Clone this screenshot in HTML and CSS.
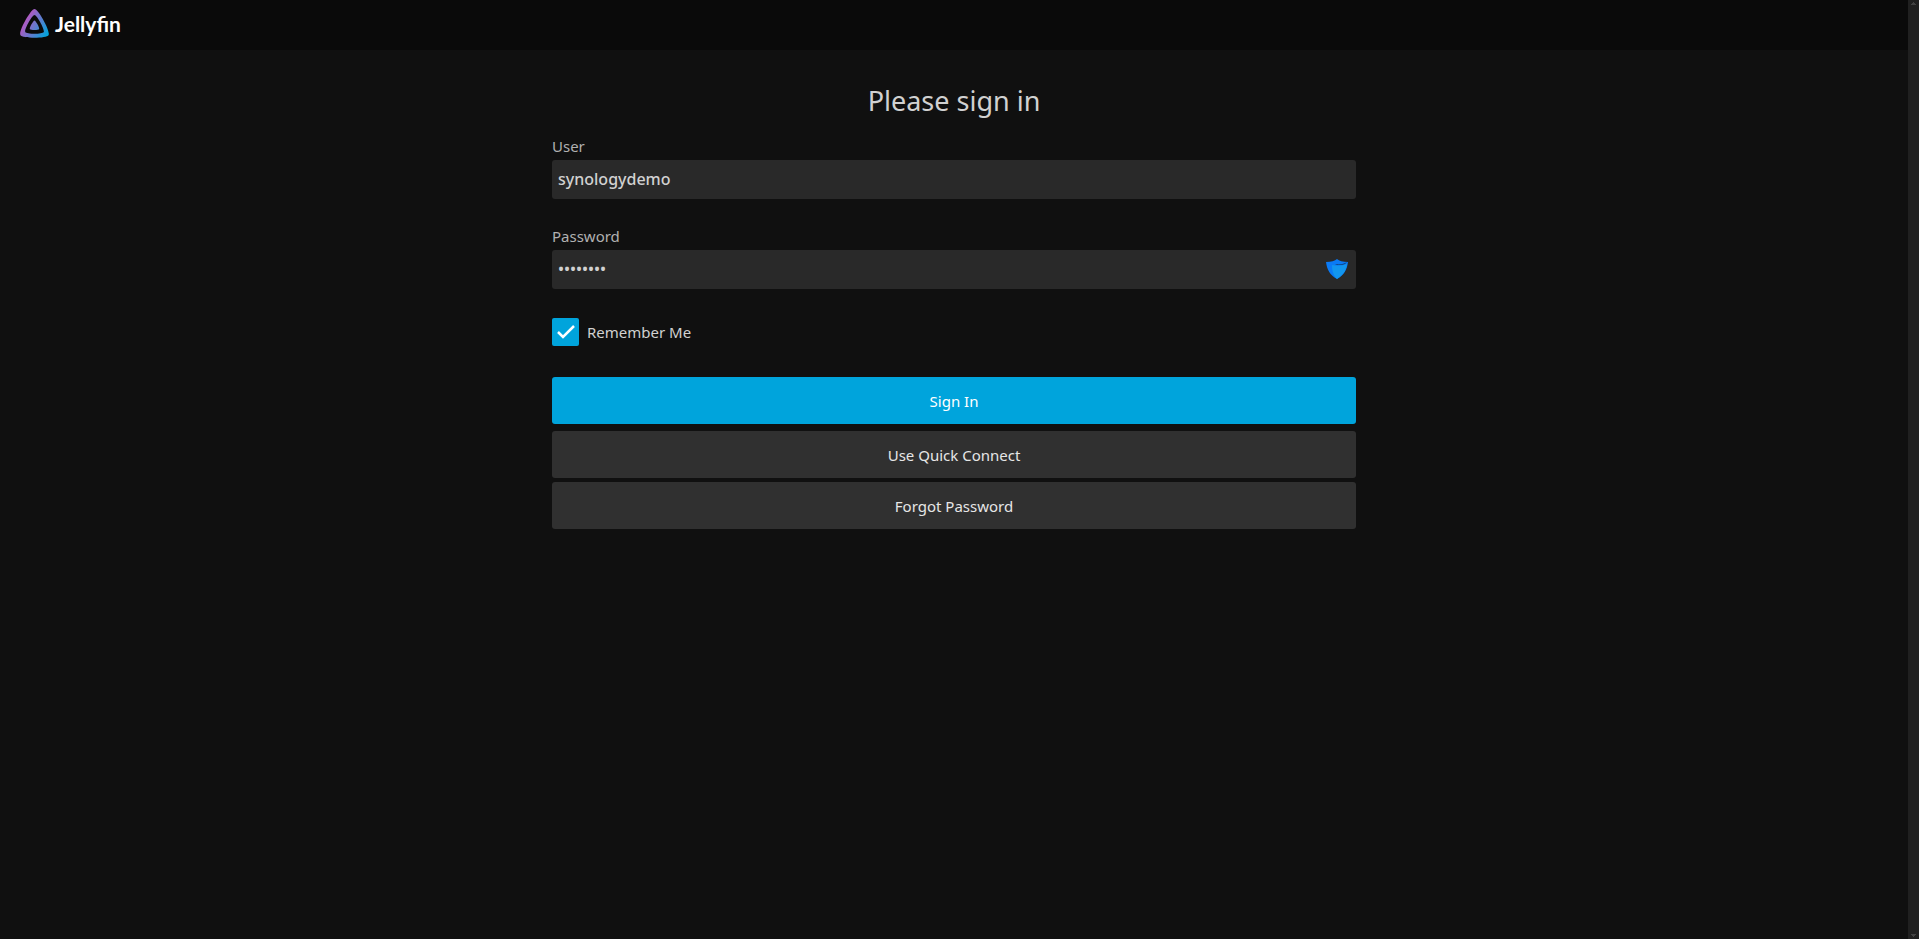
FILE: index.html
```html
<!DOCTYPE html>
<html lang="en">
    <head>
        <meta charset="utf-8">
        <meta name="viewport" content="width=device-width, initial-scale=1">
        <title>Jellyfin</title>
        <link rel="stylesheet" href="styles.css">
    </head>
    <body>
        <div class="page">
            <header class="header">
                <a class="logo" href="#">
                    <svg class="logo-icon" viewBox="0 0 512 512" aria-hidden="true">
                        <defs>
                            <linearGradient id="logo-gradient" x1="110" y1="213" x2="496" y2="436" gradientUnits="userSpaceOnUse">
                                <stop offset="0" stop-color="#aa5cc3"/>
                                <stop offset="1" stop-color="#00a4dc"/>
                            </linearGradient>
                        </defs>
                        <path fill="url(#logo-gradient)" d="M256 202c-22 0-94 131-83 152 11 22 156 22 166 0 11-21-61-152-83-152z"/>
                        <path fill="url(#logo-gradient)" fill-rule="evenodd" d="M256 0C189 0-26 391 6 457c33 66 467 65 500 0S323 0 256 0zm164 404c-21 43-306 43-327 0S213 104 256 104s185 257 164 300z"/>
                    </svg>
                    <span class="logo-text">Jellyfin</span>
                </a>
            </header>
            <main class="login">
                <form class="login-form">
                    <h1 class="title">Please sign in</h1>
                    <div class="field">
                        <label class="label" for="user">User</label>
                        <input class="input" id="user" type="text" value="synologydemo">
                    </div>
                    <div class="field">
                        <label class="label" for="password">Password</label>
                        <div class="password-box">
                            <input class="input" id="password" type="password" value="password">
                            <svg class="shield" viewBox="0 0 22 20" aria-hidden="true">
                                <path fill="#0a7af5" d="M11 0c2 2 6 3 11 3-1 8-4 13-11 17C4 16 1 11 0 3c5 0 9-1 11-3z"/>
                                <path fill="#1296ee" d="M6 6c5 1 10 1 15-1-1 7-4 11-10 15-3-3-5-7-5-14z"/>
                                <path fill="#12365f" d="M9 5c5 1 9 0 12-2-1 2-4 3-7 3-2 0-4 0-5-1z"/>
                            </svg>
                        </div>
                    </div>
                    <label class="remember">
                        <input class="checkbox" type="checkbox" checked>
                        <svg class="check" viewBox="0 0 24 24" aria-hidden="true">
                            <path fill="none" stroke="#fff" stroke-width="2.5" d="M4 12l5 5L20 6"/>
                        </svg>
                        <span>Remember Me</span>
                    </label>
                    <button class="button button-submit" type="button">Sign In</button>
                    <button class="button" type="button">Use Quick Connect</button>
                    <button class="button" type="button">Forgot Password</button>
                </form>
            </main>
        </div>
        <div class="scrollbar" aria-hidden="true">
            <svg class="arrow" viewBox="0 0 5 3"><path d="M2 0h1v1h1v1h1v1H0V2h1V1h1z"/></svg>
            <svg class="arrow" viewBox="0 0 5 3"><path d="M0 0h5v1H4v1H3v1H2V2H1V1H0z"/></svg>
        </div>
    </body>
</html>
```
FILE: styles.css
```css
* {
    box-sizing: border-box;
}

body {
    margin: 0;
    min-height: 100vh;
    display: flex;
    background-color: #101010;
    color: #d1d1d1;
    font-family: "Noto Sans", sans-serif;
    font-size: 15px;
}

.page {
    flex: 1;
}

.header {
    display: flex;
    align-items: center;
    height: 50px;
    padding: 0 20px;
    background-color: #0a0a0a;
}

.logo {
    display: flex;
    align-items: center;
    gap: 6px;
    padding-bottom: 3px;
    color: #fff;
    text-decoration: none;
}

.logo-icon {
    width: 29px;
    height: 29px;
}

.logo-text {
    font-family: Lato, sans-serif;
    font-size: 21px;
    font-weight: 700;
    line-height: 28px;
}

.login {
    display: flex;
    justify-content: center;
    padding: 32px 20px;
}

.login-form {
    display: flex;
    flex-direction: column;
    width: 100%;
    max-width: 804px;
}

.title {
    margin: 0 0 16px;
    font-size: 27px;
    font-weight: 400;
    line-height: 38px;
    text-align: center;
}

.field {
    display: flex;
    flex-direction: column;
    margin-bottom: 27px;
}

.label {
    line-height: 20px;
    margin-bottom: 4px;
    color: #b1b1b1;
}

.input {
    width: 100%;
    height: 39px;
    padding: 0 6px 1px;
    border: 0;
    border-radius: 3px;
    background-color: #292929;
    color: #d1d1d1;
    font: inherit;
    font-size: 16px;
    font-weight: 500;
}

.password-box {
    position: relative;
}

/* sits over the right end of the password box */
.shield {
    position: absolute;
    top: 9px;
    right: 8px;
    width: 22px;
    height: 20px;
}

.remember {
    display: grid;
    grid-template-columns: 27px auto;
    align-items: center;
    justify-content: start;
    column-gap: 8px;
    margin: 2px 0 31px;
    line-height: 28px;
}

.checkbox,
.check {
    grid-row: 1;
    grid-column: 1;
}

.checkbox {
    appearance: none;
    width: 27px;
    height: 28px;
    margin: 0;
    border-radius: 2px;
    background-color: #00a4dc;
}

.check {
    width: 24px;
    height: 24px;
    justify-self: center;
    pointer-events: none;
    visibility: hidden;
}

.checkbox:checked + .check {
    visibility: visible;
}

.button {
    height: 47px;
    margin-bottom: 4px;
    border: 0;
    border-radius: 3px;
    background-color: #303030;
    color: #e6e6e6;
    font: inherit;
    cursor: pointer;
}

.button-submit {
    margin-bottom: 7px;
    background-color: #00a4dc;
    color: #fff;
}

.scrollbar {
    display: flex;
    flex-direction: column;
    justify-content: space-between;
    align-items: center;
    width: 11px;
    padding: 2px 0;
    background-color: #202020;
}

.arrow {
    width: 5px;
    height: 3px;
    fill: #424242;
}
```
